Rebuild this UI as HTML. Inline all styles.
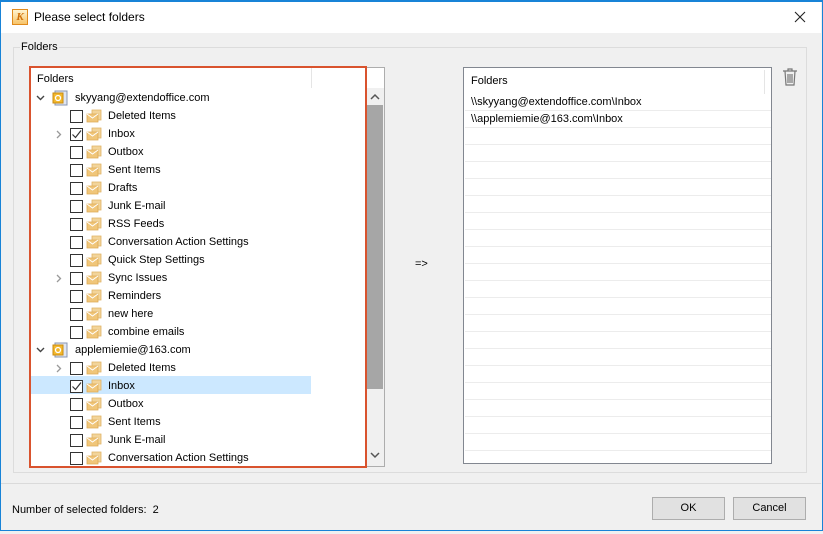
<!DOCTYPE html>
<html><head><meta charset="utf-8"><style>
*{margin:0;padding:0;box-sizing:border-box}
body{width:823px;height:534px;background:#f0f0f0;font-family:"Liberation Sans",sans-serif;font-size:11px;color:#000;position:relative;overflow:hidden}
.a{position:absolute}
.win{left:0;top:0;width:823px;height:531px;border:1px solid #1883d7;border-top:2px solid #1883d7;background:#f0f0f0}
.title{left:1px;top:2px;width:820px;height:31px;background:#fff}
.row{position:absolute;left:0;height:18px;width:280px;line-height:18px;white-space:nowrap}
.cb{position:absolute;left:39px;top:3px;width:13px;height:13px;border:1px solid #333;background:#fff}
.fd{position:absolute;left:55px;top:2px;width:16px;height:14px}
.tx{position:absolute;left:77px;top:0}
.chev{position:absolute;left:26px;top:0;color:#999;font-size:11px}
.line{position:absolute;left:1px;width:306px;height:1px;background:#ececec}
</style></head><body>
<div class="a win"></div>
<div class="a title"></div>
<div class="a" style="left:12px;top:9px;width:16px;height:16px;border:1px solid #e08a1c;background:linear-gradient(#fff3d0,#f7c46a);font:bold italic 11px 'Liberation Serif',serif;color:#d0700a;text-align:center;line-height:14px">K</div>
<div class="a" style="left:34px;top:10px;font-size:12px;color:#000">Please select folders</div>
<svg class="a" style="left:794px;top:11px" width="12" height="12" viewBox="0 0 12 12"><path d="M1 1l10 10M11 1L1 11" stroke="#222" stroke-width="1.1"/></svg>

<div class="a" style="left:13px;top:47px;width:794px;height:426px;border:1px solid #dcdcdc"></div>
<div class="a" style="left:20px;top:41px;background:#f0f0f0;padding:0 1px">Folders</div>

<div class="a" style="left:30px;top:67px;width:355px;height:400px;background:#fff;border:1px solid #adadad;overflow:hidden">
 <div class="a" style="left:280px;top:0;width:1px;height:20px;background:#e5e5e5"></div>
 <div class="a" style="left:6px;top:5px">Folders</div>
 <div class="a" style="left:335px;top:20px;width:18px;height:378px;background:#f0f0f0"></div>
 <svg class="a" style="left:339px;top:25px" width="10" height="8"><path d="M1 6l4-4 4 4" fill="none" stroke="#555" stroke-width="1.5"/></svg>
 <div class="a" style="left:336px;top:37px;width:16px;height:284px;background:#a6a6a6"></div>
 <svg class="a" style="left:339px;top:383px" width="10" height="8"><path d="M1 2l4 4 4-4" fill="none" stroke="#555" stroke-width="1.5"/></svg>
 <div class="a" style="left:0;top:308px;width:280px;height:18px;background:#cce8ff"></div>
 <div id="tree" class="a" style="left:0;top:21px;width:330px"></div>
</div>
<div class="a" style="left:29px;top:66px;width:338px;height:402px;border:2px solid #d9532e"></div>

<div class="a" style="left:415px;top:258px">=&gt;</div>

<div class="a" style="left:463px;top:67px;width:309px;height:397px;background:#fff;border:1px solid #828790;overflow:hidden">
 <div class="a" style="left:300px;top:2px;width:1px;height:24px;background:#e5e5e5"></div>
 <div class="a" style="left:7px;top:7px">Folders</div>
 <div class="a" style="left:7px;top:28px">\\skyyang@extendoffice.com\Inbox</div>
 <div class="a" style="left:7px;top:45px">\\applemiemie@163.com\Inbox</div>
 <div id="lines"></div>
</div>
<svg class="a" style="left:782px;top:68px" width="16" height="18" viewBox="0 0 16 18"><path d="M1 3h14M6 3V1h4v2M3 3l1 14h8l1-14M6 6v9M8 6v9M10 6v9" fill="none" stroke="#777" stroke-width="1.2"/></svg>

<div class="a" style="left:1px;top:483px;width:820px;height:1px;background:#dadada"></div>
<div class="a" style="left:12px;top:504px">Number of selected folders:&nbsp; 2</div>
<div class="a" style="left:652px;top:497px;width:73px;height:23px;border:1px solid #adadad;background:#e1e1e1;text-align:center;line-height:21px">OK</div>
<div class="a" style="left:733px;top:497px;width:73px;height:23px;border:1px solid #adadad;background:#e1e1e1;text-align:center;line-height:21px">Cancel</div>

<script>
var items=[["a","skyyang@extendoffice.com"],["i","Deleted Items"],["i","Inbox",1,1],["i","Outbox"],["i","Sent Items"],["i","Drafts"],["i","Junk E-mail"],["i","RSS Feeds"],["i","Conversation Action Settings"],["i","Quick Step Settings"],["i","Sync Issues",0,1],["i","Reminders"],["i","new here"],["i","combine emails"],["a","applemiemie@163.com"],["i","Deleted Items",0,1],["i","Inbox",1],["i","Outbox"],["i","Sent Items"],["i","Junk E-mail"],["i","Conversation Action Settings"]];
var fold='<svg class="fd" viewBox="0 0 16 14"><path d="M6 1h9v10H6z" fill="#f2d49a" stroke="#e0b264" stroke-width=".8"/><path d="M1 5h11v8H1z" fill="#f0c67a" stroke="#deaa55" stroke-width=".8"/><path d="M1 5l5.5 4L12 5" fill="none" stroke="#fff" stroke-width="1"/></svg>';
var acc='<svg style="position:absolute;left:21px;top:1px" width="16" height="16" viewBox="0 0 16 16"><rect x="3" y="1" width="12" height="14" fill="#dfe6f3" stroke="#8895b0"/><rect x="1" y="3" width="10" height="10" fill="#f3b82c" stroke="#c98a10"/><circle cx="6" cy="8" r="2.5" fill="none" stroke="#fff" stroke-width="1.3"/></svg>';
var h="";
items.forEach(function(it,i){
 var y=i*18;
 if(it[0]=="a"){h+='<div class="row" style="top:'+y+'px"><svg style="position:absolute;left:5px;top:6px" width="9" height="6"><path d="M1 1l3.5 3.5L8 1" fill="none" stroke="#444" stroke-width="1.4"/></svg>'+acc+'<span class="tx" style="left:44px">'+it[1]+'</span></div>';}
 else{h+='<div class="row" style="top:'+y+'px">'+(it[3]?'<svg style="position:absolute;left:25px;top:5px" width="6" height="9"><path d="M1 1l3.5 3.5L1 8" fill="none" stroke="#999" stroke-width="1.3"/></svg>':'')+'<span class="cb">'+(it[2]?'<svg width="11" height="11" style="position:absolute;left:0;top:0"><path d="M1.5 5.5l3 3 5.5-7" fill="none" stroke="#333" stroke-width="1.2"/></svg>':'')+'</span>'+fold+'<span class="tx">'+it[1]+'</span></div>';}
});
document.getElementById("tree").innerHTML=h;
var l="";for(var y=42;y<397;y+=17)l+='<div class="line" style="top:'+y+'px"></div>';
document.getElementById("lines").innerHTML=l;
</script>
</body></html>
